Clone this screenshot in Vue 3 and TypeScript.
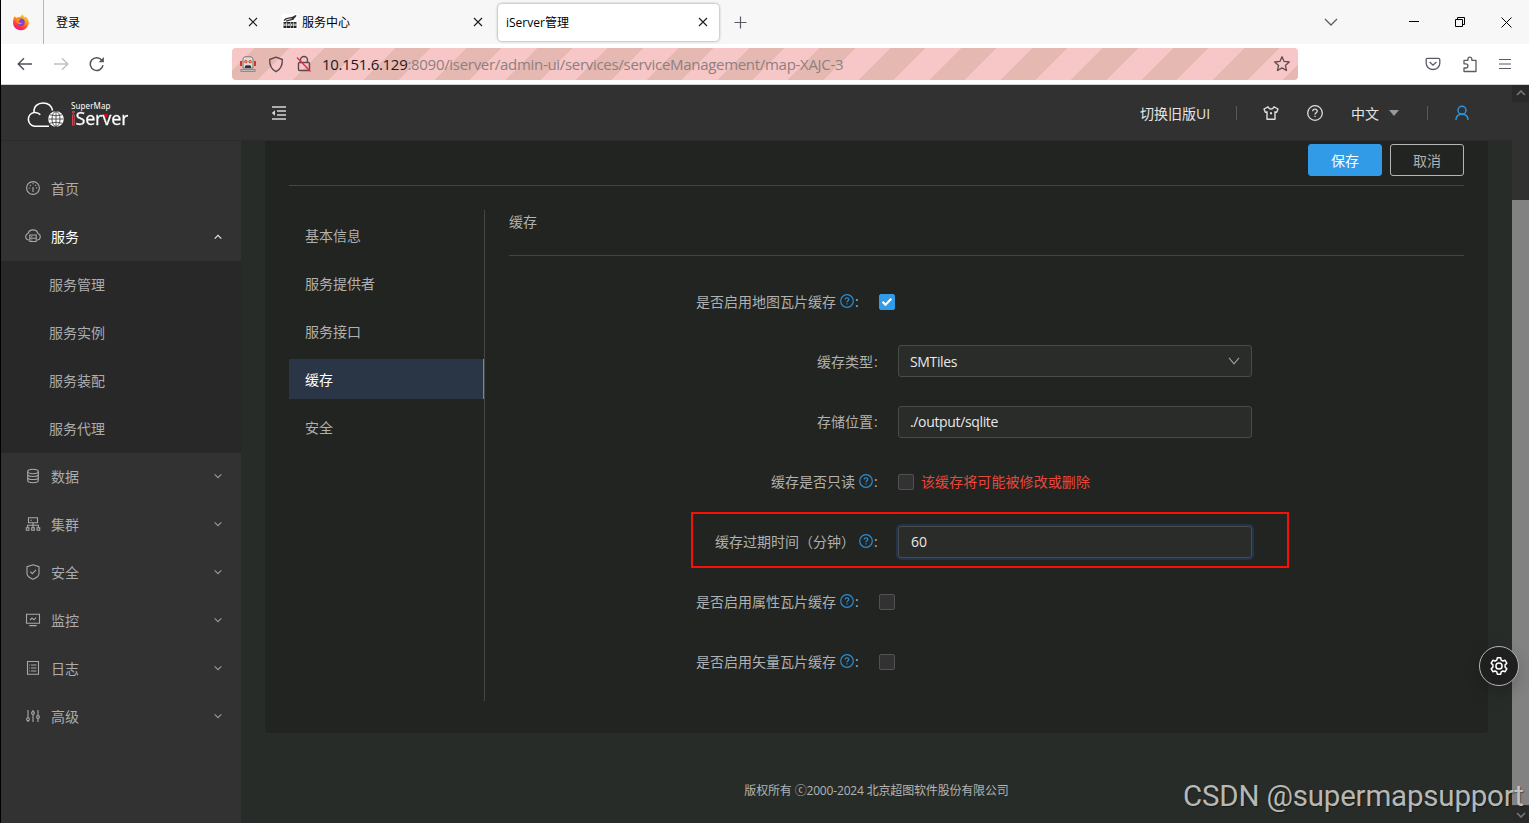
<script setup lang="ts">
interface MenuItem {
  key: string
  label: string
  open?: boolean
  leaf?: boolean
  children?: string[]
}

const menu: MenuItem[] = [
  { key: 'home', label: '首页', leaf: true },
  { key: 'service', label: '服务', open: true, children: ['服务管理', '服务实例', '服务装配', '服务代理'] },
  { key: 'data', label: '数据' },
  { key: 'cluster', label: '集群' },
  { key: 'security', label: '安全' },
  { key: 'monitor', label: '监控' },
  { key: 'log', label: '日志' },
  { key: 'advanced', label: '高级' },
]

const sections: string[] = ['基本信息', '服务提供者', '服务接口', '缓存', '安全']
const activeSection = '缓存'

interface Field {
  label: string
  kind: 'check' | 'select' | 'input' | 'number'
  help?: boolean
  narrow?: boolean
  checked?: boolean
  value?: string
  warn?: string
}

const fields: Field[] = [
  { label: '是否启用地图瓦片缓存', kind: 'check', help: true, narrow: true, checked: true },
  { label: '缓存类型', kind: 'select', value: 'SMTiles' },
  { label: '存储位置', kind: 'input', value: './output/sqlite' },
  { label: '缓存是否只读', kind: 'check', help: true, warn: '该缓存将可能被修改或删除' },
  { label: '缓存过期时间（分钟）', kind: 'number', help: true, value: '60' },
  { label: '是否启用属性瓦片缓存', kind: 'check', help: true, narrow: true },
  { label: '是否启用矢量瓦片缓存', kind: 'check', help: true, narrow: true },
]
</script>

<template>
  <div class="window">
    <div class="tabbar">
      <div class="pinned">
        <svg width="18" height="18" viewBox="0 0 18 18">
          <defs>
            <linearGradient id="fox" x1="0.8" y1="0" x2="0.3" y2="1">
              <stop offset="0" stop-color="#ffe226" />
              <stop offset="0.45" stop-color="#ff8a16" />
              <stop offset="0.75" stop-color="#ff3647" />
              <stop offset="1" stop-color="#e31587" />
            </linearGradient>
          </defs>
          <path d="M2.6 3.2 4.6 5C5.6 4 6.5 4 8 4.1L10.6 1.2 12.4 4.2 13.2 3.4C15.7 5 16.8 7.600 16.800 9.600A7.900 7.600 0 0 1 1 9.800C1 7 1.500 5 2.600 3.200Z" fill="url(#fox)" />
          <circle cx="9" cy="9.300" r="3.700" fill="#7a42dc" />
          <path d="M4.500 5.500C6.500 4.800 8 5.500 8.700 6.800L6.600 8C7 10 9 10 10.500 9.600 9.700 12 5.800 12 4.500 9Z" fill="#ff8b1a" />
        </svg>
      </div>
      <div class="tab tab-one">
        <span class="tab-text">登录</span>
        <svg class="x" width="10" height="10" viewBox="0 0 10 10"><path d="M1 1l8 8M9 1l-8 8" /></svg>
      </div>
      <div class="tab tab-two">
        <svg class="favicon" width="16" height="16" viewBox="0 0 16 16">
          <rect width="16" height="16" fill="#fff" />
          <path d="M2 6.500C5 2.500 8 6 14 1.500 12 5.500 10 4.500 7.500 6.500M4 7.200 12 4.800" fill="none" stroke="#333" stroke-width="1.300" />
          <path d="M1.500 8.800h13M1.500 13h13" stroke="#222" stroke-width="1.800" stroke-dasharray="3 .5" />
          <path d="M1.500 11h13" stroke="#444" stroke-width="1.600" stroke-dasharray="1 .7" />
        </svg>
        <span class="tab-text">服务中心</span>
        <svg class="x" width="10" height="10" viewBox="0 0 10 10"><path d="M1 1l8 8M9 1l-8 8" /></svg>
      </div>
      <div class="tab tab-active">
        <span class="tab-text">iServer管理</span>
        <svg class="x" width="10" height="10" viewBox="0 0 10 10"><path d="M1 1l8 8M9 1l-8 8" /></svg>
      </div>
      <svg class="plus" width="13" height="13" viewBox="0 0 13 13"><path d="M6.500 .5v12M.5 6.500h12" /></svg>
      <div class="win-controls">
        <svg width="14" height="8" viewBox="0 0 14 8"><path d="M1 1l6 6 6-6" fill="none" stroke="#5b5b66" stroke-width="1.300" /></svg>
        <svg class="min" width="10" height="10" viewBox="0 0 10 10"><path d="M0 4.500h10" stroke="#000" /></svg>
        <svg class="max" width="10" height="10" viewBox="0 0 10 10"><path d="M.5 2.500h7v7h-7zM2.500 2.500v-2h7v7h-2" fill="none" stroke="#000" /></svg>
        <svg class="close" width="11" height="11" viewBox="0 0 11 11"><path d="M.5 .5l10 10M10.500 .5l-10 10" stroke="#000" /></svg>
      </div>
    </div>

    <div class="toolbar">
      <div class="nav">
        <svg width="16" height="14" viewBox="0 0 16 14"><path d="M15 7H1.500M7 1.200 1.200 7 7 12.800" fill="none" stroke="#4f4f59" stroke-width="1.400" /></svg>
        <svg width="16" height="14" viewBox="0 0 16 14"><path d="M1 7h13.500M9 1.200 14.800 7 9 12.800" fill="none" stroke="#bfbfc4" stroke-width="1.400" /></svg>
        <svg width="16" height="16" viewBox="0 0 16 16"><path d="M14 9.200A6.400 6.400 0 1 1 12.800 4.200" fill="none" stroke="#55555f" stroke-width="1.500" /><path d="M14.900 1v5.300H9.600z" fill="#55555f" /></svg>
      </div>
      <div class="urlbar">
        <svg class="robot" width="16" height="16" viewBox="0 0 16 16">
          <path d="M1 5v5M15 5v5" stroke="#d4352f" stroke-width="2" />
          <path d="M4.500 .8h7l1.500 2V12H3V2.800z" fill="#ddd" stroke="#777" />
          <path d="M.8 13.500h14.400v2H.8z" fill="#bbb" stroke="#777" stroke-width=".7" />
          <circle cx="5.900" cy="5.700" r="1.600" fill="#c93722" /><circle cx="10.100" cy="5.700" r="1.600" fill="#c93722" />
          <circle cx="5.900" cy="5.700" r=".8" fill="#ffd02a" /><circle cx="10.100" cy="5.700" r=".8" fill="#ffd02a" />
          <path d="M5 12v-2l1-.8h4l1 .8v2z" fill="#333" />
        </svg>
        <svg class="shield" width="16" height="17" viewBox="0 0 16 17"><path d="M8 1.200 14.300 3.500C14.600 9.500 12.500 13.500 8 15.700 3.500 13.500 1.400 9.500 1.700 3.500z" fill="none" stroke="#5a4a50" stroke-width="1.400" stroke-linejoin="round" /></svg>
        <svg class="lock" width="16" height="18" viewBox="0 0 16 18"><path d="M4.500 7.500V5a3.500 3.500 0 0 1 7 0v2.500M3.500 7.500h9q1 0 1 1v6q0 1-1 1h-9q-1 0-1-1v-6q0-1 1-1z" fill="none" stroke="#5a4a50" stroke-width="1.400" /><path d="M1 2.500l13.500 14" stroke="#e22850" stroke-width="1.300" /></svg>
        <span class="url"><b>10.151.6.129</b>:8090/iserver/admin-ui/services/serviceManagement/map-XAJC-3</span>
        <svg class="star" width="18" height="18" viewBox="0 0 18 18"><path d="M9 1.700l2.100 4.700 5.200.6-3.900 3.400 1.100 5.100L9 12.900l-4.500 2.600 1.100-5.100L1.700 7l5.200-.6z" fill="none" stroke="#5f4b50" stroke-width="1.300" stroke-linejoin="round" /></svg>
      </div>
      <div class="tools">
        <svg width="16" height="16" viewBox="0 0 16 16"><path d="M2.500 2.300h11q1.300 0 1.300 1.300v3.600a6.800 6.300 0 0 1-13.600 0V3.600q0-1.300 1.300-1.300zM4.600 6l3.400 3.200L11.400 6" fill="none" stroke="#5b5b66" stroke-width="1.300" /></svg>
        <svg width="16" height="18" viewBox="0 0 16 18"><path d="M2 8V5.300h4V4a1.800 1.800 0 0 1 3.800 0v1.300h4.200v11.200H2V13h1.800a1.900 1.900 0 0 0 0-4.200H2z" fill="none" stroke="#5b5b66" stroke-width="1.300" stroke-linejoin="round" /></svg>
        <svg width="12" height="12" viewBox="0 0 12 12"><path d="M0 1.500h12M0 6h12M0 10.500h12" stroke="#5b5b66" stroke-width="1.200" /></svg>
      </div>
    </div>

    <div class="page">
      <header class="header">
        <div class="logo">
          <svg width="38" height="26" viewBox="0 0 38 26">
            <path d="M23 24.300H8.500A7 7 0 0 1 8 10.500C7.500 4 12 1 17 1c5 0 8.500 2.600 9.500 7.500M8 10.500c2.500-.3 5 .7 6.300 2.300" fill="none" stroke="#fff" stroke-width="1.600" />
            <circle cx="30" cy="17" r="7.800" fill="#fff" />
            <path d="M30 9.500v15M22.500 17h15M24 12.800q6 2 12 0M24 21.200q6-2 12 0" fill="none" stroke="#313131" stroke-width=".8" />
            <ellipse cx="30" cy="17" rx="4" ry="7.500" fill="none" stroke="#313131" stroke-width=".8" />
          </svg>
          <div class="brand">
            <span class="brand-top">SuperMap</span>
            <span class="brand-name">iServer</span>
          </div>
        </div>
        <svg class="fold" width="16" height="14" viewBox="0 0 16 14"><path d="M1 1h14M6 5h9M6 9h9M1 13h14" stroke="#d6d6d6" stroke-width="1.300" /><path d="M4 4.300v5.400L.8 7z" fill="#d6d6d6" /></svg>
        <div class="head-right">
          <span class="switch">切换旧版UI</span>
          <i class="sep sep-a"></i>
          <svg class="shirt" width="16" height="16" viewBox="0 0 16 16"><path d="M5 1.800 1 4l1.300 3.300 1.700-.5V14.300h8V6.800l1.700.5L15 4l-4-2.200Q9.800 4 8 4T5 1.800z" fill="none" stroke="#dedede" stroke-width="1.400" stroke-linejoin="round" /><path d="M7 7.300h2v2H7z" fill="#dedede" /></svg>
          <svg class="q" width="18" height="18" viewBox="0 0 18 18"><circle cx="9" cy="9" r="7.300" fill="none" stroke="#dedede" stroke-width="1.300" /><path d="M6.800 7.200A2.200 2 0 0 1 11.200 7.200C11.200 8.700 9 8.700 9 10.500M9 11.800v1.300" fill="none" stroke="#dedede" stroke-width="1.300" /></svg>
          <span class="lang">中文</span>
          <i class="caret"></i>
          <i class="sep sep-b"></i>
          <svg class="user" width="14" height="16" viewBox="0 0 14 16"><circle cx="7" cy="5.200" r="4" /><path d="M.9 15c.2-3.600 2.500-5.800 6.100-5.800s5.900 2.200 6.100 5.800" /></svg>
        </div>
      </header>

      <div class="body">
        <aside class="sidebar">
          <template v-for="item in menu" :key="item.key">
            <div class="menu-item" :class="{ opened: item.open }">
              <svg class="menu-icon" width="16" height="16" viewBox="0 0 16 16">
                <g v-if="item.key === 'home'"><circle cx="8" cy="8" r="6.400" /><path d="M8 7v5M8 3v1.300M3.700 8H5M11 8h1.300M5 4.900l.9.900M11 4.900l-.9.900" /></g>
                <g v-else-if="item.key === 'service'"><path d="M4 12H3.500A3.300 3.300 0 0 1 3 5.600 5.200 5.200 0 0 1 13 5.600 3.300 3.300 0 0 1 12.500 12H12M4.800 7h6.400v6.500H4.800zM4.800 10.200h6.400M6.300 8.600h1M6.300 12h1" /></g>
                <g v-else-if="item.key === 'data'"><ellipse cx="8" cy="3.500" rx="5.300" ry="2.200" /><path d="M2.700 3.500v9c0 2.900 10.600 2.900 10.600 0v-9M2.700 6.500c0 2.600 10.600 2.600 10.600 0M2.700 9.500c0 2.700 10.600 2.700 10.600 0" /></g>
                <g v-else-if="item.key === 'cluster'"><path d="M3.500 1.700h9v5h-9zM8 6.700V12M2.600 11.500V9.200h10.800v2.300M5.500 4.200h1.300M1.300 11.800h2.600v2.500H1.300zM6.700 11.800h2.600v2.500H6.700zM12.100 11.800h2.600v2.500h-2.600z" /></g>
                <g v-else-if="item.key === 'security'"><path d="M8 .8 14 2.700V9.500C14 12.300 10.500 14.300 8 15.300 5.500 14.300 2 12.300 2 9.500V2.700zM5.300 7.700l2 2L11 5.800" /></g>
                <g v-else-if="item.key === 'monitor'"><path d="M1.500 2.300h13v9h-13zM4.300 13.600h7.400M5 8l2-2 2 1.800L11 5.700" /></g>
                <g v-else-if="item.key === 'log'"><path d="M2.500 1.500h11v12.800h-11zM6 5h5.500M6 8h5.500M6 11h5.500M4.200 5h.9M4.200 8h.9M4.200 11h.9" /></g>
                <g v-else><path d="M3 2v8M3 12.700V14M8 2v1.500M8 6.500V14M13 2v5.500M13 10.500V14" /><circle cx="3" cy="11.200" r="1.400" /><circle cx="8" cy="5" r="1.400" /><circle cx="13" cy="9" r="1.400" /></g>
              </svg>
              <span>{{ item.label }}</span>
              <svg v-if="!item.leaf" class="chev" width="8" height="6" viewBox="0 0 8 6">
                <path :d="item.open ? 'M.7 4.700 4 1.400 7.300 4.700' : 'M.7 1.300 4 4.600 7.300 1.300'" />
              </svg>
            </div>
            <div v-if="item.children" class="submenu">
              <div v-for="child in item.children" :key="child" class="sub-item">{{ child }}</div>
            </div>
          </template>
        </aside>

        <main class="main">
          <section class="panel">
            <div class="actions">
              <button class="btn primary">保存</button>
              <button class="btn">取消</button>
            </div>
            <div class="content">
              <nav class="sections">
                <div v-for="s in sections" :key="s" class="section" :class="{ active: s === activeSection }">{{ s }}</div>
              </nav>
              <div class="detail">
                <div class="title">缓存</div>
                <div v-for="f in fields" :key="f.label" class="row" :class="f.kind">
                  <div class="label" :class="{ narrow: f.narrow }">
                    <span>{{ f.label }}</span>
                    <svg v-if="f.help" class="help" width="14" height="14" viewBox="0 0 14 14"><circle cx="7" cy="7" r="6.300" /><path d="M5.200 5.500A1.800 1.700 0 0 1 8.800 5.500C8.800 6.800 7 6.800 7 8.300M7 9.300v1.300" /></svg>
                    <span class="colon">:</span>
                  </div>
                  <template v-if="f.kind === 'check'">
                    <span class="checkbox" :class="{ checked: f.checked }">
                      <svg v-if="f.checked" width="12" height="10" viewBox="0 0 12 10"><path d="M1.500 4.700l3 3L10.300 1.800" fill="none" stroke="#fff" stroke-width="2.200" /></svg>
                    </span>
                    <span v-if="f.warn" class="warn">{{ f.warn }}</span>
                  </template>
                  <div v-else class="control" :class="{ focused: f.kind === 'number' }">
                    <span>{{ f.value }}</span>
                    <svg v-if="f.kind === 'select'" width="12" height="8" viewBox="0 0 12 8"><path d="M1 .8l5 6 5-6" fill="none" stroke="#9b9d9b" stroke-width="1.200" /></svg>
                  </div>
                  <div v-if="f.kind === 'number'" class="mark"></div>
                </div>
              </div>
            </div>
          </section>
          <footer class="footer">版权所有 <span class="copy">ⓒ</span>2000-2024 北京超图软件股份有限公司</footer>
        </main>
      </div>

      <div class="scrollbar">
        <svg width="10" height="6" viewBox="0 0 10 6"><path d="M1 5l4-4 4 4" /></svg>
        <div class="thumb"></div>
        <svg width="10" height="6" viewBox="0 0 10 6"><path d="M1 1l4 4 4-4" /></svg>
      </div>

      <div class="gear">
        <svg width="20" height="20" viewBox="0 0 20 20">
          <path d="M8.300 1.800h3.400l.5 2.300 1.600.9 2.300-.7 1.700 2.900-1.700 1.700v2.200l1.700 1.700-1.700 2.900-2.300-.7-1.600.9-.5 2.300H8.300l-.5-2.300-1.600-.9-2.300.7-1.700-2.900 1.700-1.700V8.900L2.200 7.200l1.700-2.900 2.300.7 1.600-.9z" />
          <circle cx="10" cy="10" r="3.100" />
        </svg>
      </div>
      <div class="watermark">CSDN @supermapsupport</div>
    </div>
  </div>
</template>

<style>
body {
  margin: 0;
  overflow: hidden;
}
</style>

<style scoped>
* {
  box-sizing: border-box;
}
svg {
  display: block;
  flex: none;
}
.window {
  position: relative;
  width: 1529px;
  height: 823px;
  overflow: hidden;
  display: flex;
  flex-direction: column;
  border-left: 1px solid #000;
  font-family: "Open Sans", "Noto Sans CJK SC", sans-serif;
  font-size: 14px;
  background: #fff;
}
.tabbar {
  display: flex;
  align-items: center;
  height: 44px;
  background: #f7f7f7;
  font-size: 12px;
  color: #000;
}
.pinned {
  width: 43px;
  height: 44px;
  padding: 13px 0 0 11px;
  border-right: 1px solid #b5b5b5;
}
.tab {
  display: flex;
  align-items: center;
  height: 37px;
}
.tab-text {
  flex: 1;
  white-space: nowrap;
}
.tab-one {
  width: 226px;
  padding: 0 12px;
  margin-right: 12px;
}
.tab-two {
  width: 201px;
}
.favicon {
  margin-right: 4px;
}
.tab-active {
  width: 221px;
  margin-left: 15px;
  padding: 0 11px 0 8px;
  background: #fff;
  border-radius: 4px;
  box-shadow: 0 0 3px rgba(0, 0, 0, 0.45);
}
.x {
  stroke: #1b1b20;
  stroke-width: 1.1;
}
.plus {
  margin-left: 15px;
  stroke: #5b5b66;
  stroke-width: 1.2;
}
.win-controls {
  display: flex;
  align-items: center;
  margin-left: auto;
  margin-right: 17px;
}
.win-controls .min {
  margin-left: 71px;
}
.win-controls .max {
  margin-left: 36px;
}
.win-controls .close {
  margin-left: 36px;
}
.toolbar {
  display: flex;
  align-items: center;
  height: 41px;
  padding-bottom: 1px;
  background: #fff;
  border-bottom: 1px solid #cdd3ce;
}
.nav {
  display: flex;
  align-items: center;
  gap: 20px;
  width: 231px;
  padding-left: 16px;
  padding-top: 1px;
}
.urlbar {
  display: flex;
  align-items: center;
  width: 1066px;
  height: 32px;
  padding: 0 7px 0 8px;
  margin-top: 1px;
  border-radius: 4px;
  background: repeating-linear-gradient(135deg, #f7c6c6 0 15.700px, #e6b8b2 15.700px 40.700px, #f7c6c6 40.700px 50px);
}
.shield {
  margin-left: 12px;
}
.lock {
  margin-left: 12px;
}
.url {
  flex: 1;
  margin-left: 10px;
  padding-bottom: 1px;
  font-size: 15px;
  letter-spacing: -0.3px;
  color: #8d8083;
}
.url b {
  font-weight: 400;
  color: #201a1f;
}
.tools {
  display: flex;
  align-items: center;
  gap: 21px;
  margin-left: auto;
  margin-right: 18px;
}
.page {
  position: relative;
  height: 738px;
  display: flex;
  flex-direction: column;
  background: #282c28;
}
.header {
  display: flex;
  align-items: center;
  width: 1511px;
  height: 56px;
  background: #313131;
  border-bottom: 1px solid #2b2c2b;
}
.logo {
  display: flex;
  align-items: center;
  width: 270px;
  padding-left: 25px;
  padding-top: 5px;
}
.brand {
  display: flex;
  flex-direction: column;
  margin-left: 7px;
  margin-top: -2px;
  color: #fff;
  font-family: "Noto Sans", sans-serif;
}
.brand-top {
  font-size: 8px;
  line-height: 9px;
  letter-spacing: 0.1px;
}
.brand-name {
  position: relative;
  font-size: 18px;
  line-height: 17px;
  letter-spacing: -0.2px;
  -webkit-text-stroke: 0.3px transparent;
  background:
    linear-gradient(#e60012, #e60012) 0 0 / 4.5px 100% no-repeat,
    #fff;
  background-clip: text;
  color: transparent;
}
.brand-name::after {
  content: "";
  position: absolute;
  left: 33px;
  top: 4px;
  border: 2.5px solid transparent;
  border-top: 5px solid #e60012;
  border-bottom: 0;
}
.head-right {
  display: flex;
  align-items: center;
  margin-left: auto;
  margin-right: 43px;
  color: #e4e4e4;
}
.switch {
  width: 96px;
  white-space: nowrap;
}
.sep {
  width: 1px;
  height: 14px;
  background: #595959;
}
.shirt {
  margin-left: 26px;
}
.q {
  margin-left: 27px;
}
.lang {
  margin-left: 27px;
  width: 38px;
}
.caret {
  border: 5px solid transparent;
  border-top: 6px solid #999;
  border-bottom: 0;
}
.sep-b {
  margin-left: 28px;
}
.user {
  margin-left: 27px;
  fill: none;
  stroke: #2f97e2;
  stroke-width: 1.4;
}
.body {
  display: flex;
  flex: 1;
  width: 1511px;
}
.sidebar {
  width: 240px;
  padding-top: 24px;
  background: #323232;
  color: #acacac;
}
.menu-item {
  display: flex;
  align-items: center;
  height: 48px;
  padding: 0 19px 2px 24px;
}
.menu-item.opened {
  color: #fff;
}
.menu-icon {
  margin-right: 10px;
  fill: none;
  stroke: #a9a9a9;
  stroke-width: 1.1;
}
.chev {
  margin-left: auto;
  fill: none;
  stroke: #979797;
  stroke-width: 1.2;
}
.opened .chev {
  margin-top: 2px;
  stroke: #e5e5e5;
}
.submenu {
  background: #282828;
}
.sub-item {
  height: 48px;
  padding-left: 48px;
  line-height: 48px;
}
.main {
  flex: 1;
  padding: 0 24px;
}
.panel {
  height: 592px;
  padding: 0 24px;
  background: #212421;
  border-radius: 0 0 4px 4px;
  color: #b0b1b0;
}
.actions {
  display: flex;
  justify-content: flex-end;
  gap: 8px;
  height: 45px;
  padding-top: 3px;
  border-bottom: 1px solid #424542;
}
.btn {
  width: 74px;
  height: 32px;
  padding: 0;
  border: 1px solid #b5b5b5;
  border-radius: 3px;
  background: transparent;
  color: #b0b1b0;
  font: inherit;
}
.btn.primary {
  background: #319be8;
  border-color: #319be8;
  color: #fff;
}
.content {
  display: flex;
  padding-top: 24px;
}
.sections {
  width: 196px;
  height: 491px;
  padding-top: 5px;
  border-right: 1px solid #434643;
}
.section {
  height: 40px;
  margin-bottom: 8px;
  padding-left: 16px;
  line-height: 41px;
}
.section.active {
  background: #2a3545;
  border-right: 1px solid #319be8;
  color: #fff;
}
.detail {
  flex: 1;
  margin-left: 24px;
}
.title {
  height: 46px;
  margin-bottom: 16px;
  line-height: 24px;
  border-bottom: 1px solid #424542;
}
.row {
  position: relative;
  display: flex;
  align-items: center;
  height: 60px;
}
.row.select .control {
  margin-bottom: 2px;
}
.label {
  display: flex;
  justify-content: flex-end;
  align-items: center;
  width: 371px;
  margin-right: 18px;
  padding-bottom: 2px;
  white-space: nowrap;
}
.label.narrow {
  width: 352px;
}
.help {
  margin-left: 4px;
  fill: none;
  stroke: #2b8cd2;
  stroke-width: 1.2;
}
.colon {
  width: 6px;
  margin-left: 1px;
}
.checkbox {
  display: flex;
  align-items: center;
  justify-content: center;
  width: 16px;
  height: 16px;
  border: 1px solid #515151;
  border-radius: 2px;
  background: #323232;
}
.checkbox.checked {
  background: #319be8;
  border-color: #319be8;
}
.warn {
  margin-left: 7px;
  padding-bottom: 2px;
  letter-spacing: 0.08px;
  color: #e8483b;
}
.control {
  display: flex;
  align-items: center;
  justify-content: space-between;
  width: 354px;
  height: 32px;
  padding: 0 11px;
  border: 1px solid #484b48;
  border-radius: 3px;
  background: #292c29;
  color: #e8e8e8;
  letter-spacing: -0.35px;
}
.control span {
  padding-bottom: 1px;
}
.select .control span {
  padding-bottom: 0;
}
.control.focused {
  padding: 0 12px;
  letter-spacing: 0;
  box-shadow: 0 0 0 2px #21344d;
}
.mark {
  position: absolute;
  left: 182px;
  top: 0;
  width: 598px;
  height: 56px;
  border: 2px solid #fb1104;
}
.footer {
  margin-top: 48px;
  text-align: center;
  font-size: 12px;
  line-height: 18px;
  letter-spacing: -0.17px;
  color: #b3b4b3;
}
.copy {
  font-family: "Noto Sans CJK SC", sans-serif;
}
.scrollbar {
  position: absolute;
  right: 0;
  top: 0;
  width: 17px;
  height: 738px;
  display: flex;
  flex-direction: column;
  align-items: center;
  justify-content: space-between;
  padding: 5px 0;
  background: linear-gradient(#292929 0 17px, #313131 17px 721px, #292929 721px);
  fill: none;
  stroke: #777;
  stroke-width: 1.6;
}
.thumb {
  width: 17px;
  height: 606px;
  margin-top: 104px;
  margin-bottom: 7px;
  background: #828282;
}
.gear {
  position: absolute;
  left: 1478px;
  top: 561px;
  display: flex;
  align-items: center;
  justify-content: center;
  width: 40px;
  height: 40px;
  border: 1px solid #b5b5b5;
  border-radius: 50%;
  background: #1f1f1f;
  box-shadow: 0 6px 16px rgba(0, 0, 0, 0.2);
  fill: none;
  stroke: #fff;
  stroke-width: 1.5;
  stroke-linejoin: round;
}
.watermark {
  position: absolute;
  left: 1182px;
  top: 689px;
  font-family: Roboto, sans-serif;
  font-size: 29.500px;
  line-height: 44px;
  letter-spacing: -0.2px;
  white-space: nowrap;
  color: rgba(205, 207, 205, 0.88);
  text-shadow: 1px 1px 1px rgba(0, 0, 0, 0.4);
}
</style>
